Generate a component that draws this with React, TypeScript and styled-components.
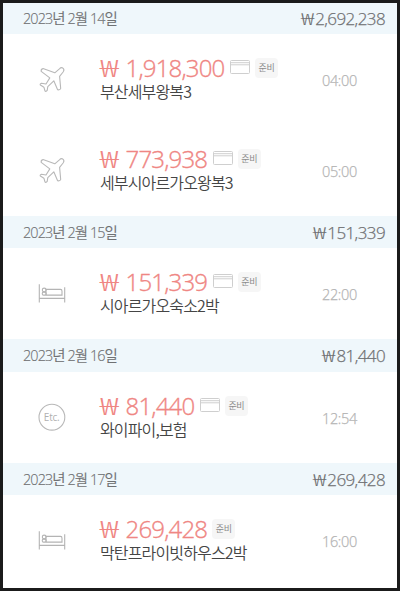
import React from "react";
import styled, { createGlobalStyle } from "styled-components";

const GlobalStyle = createGlobalStyle`
  * { box-sizing: border-box; }
  body { margin: 0; background: #1b1b1b; font-family: "Open Sans", "Noto Sans CJK KR", sans-serif; }
`;

const Frame = styled.main`
  width: 400px;
  height: 591px;
  padding: 3px;
  background: #1b1b1b;
  overflow: hidden;
`;

const Screen = styled.div`
  height: 585px;
  background: #fff;
  display: flex;
  flex-direction: column;
`;

const DayHeader = styled.header<{ $height: number }>`
  flex: none;
  height: ${(p) => p.$height}px;
  padding: 1px 12px 0 20px;
  display: flex;
  align-items: center;
  justify-content: space-between;
  background: #eff7fb;
  color: #6f7173;
  white-space: nowrap;
`;

const DayLabel = styled.span`
  font-size: 14.4px;
  line-height: 20px;
  font-weight: 350;
  letter-spacing: -0.9px;
  -webkit-text-stroke: 0.15px #6f7173;
`;

const DayTotal = styled.span`
  display: flex;
  font-size: 17px;
  line-height: 22px;
  font-weight: 350;
  letter-spacing: -0.6px;
  -webkit-text-stroke: 0.25px #6f7173;
`;

const Won = styled.span<{ $width: number }>`
  display: inline-block;
  flex: none;
  width: ${(p) => p.$width}px;
  font-family: "Noto Sans CJK KR", sans-serif;
  font-weight: 300;
  letter-spacing: 0;
  -webkit-text-stroke: 0;
  transform: translateY(-1px) scaleX(1.45);
  transform-origin: left center;
`;

const Row = styled.article`
  flex: none;
  height: 91px;
  display: grid;
  grid-template-columns: 97px 1fr 105px;
`;

const IconCell = styled.div`
  display: flex;
  justify-content: center;
  padding-top: 25px;
  svg { display: block; }
`;

const Details = styled.div`
  padding-top: 20px;
  white-space: nowrap;
`;

const AmountLine = styled.div`
  height: 27px;
  display: flex;
  align-items: center;
`;

const Amount = styled.span`
  display: flex;
  color: #ef8683;
  font-size: 24px;
  line-height: 27px;
  font-weight: 300;
  letter-spacing: -0.8px;
  -webkit-text-stroke: 0.35px #ef8683;
`;

const CardIcon = styled.svg`
  display: block;
  margin: 0 0 2px 5.5px;
`;

const Badge = styled.span`
  width: 23px;
  height: 20px;
  margin: 0 0 0 5px;
  border-radius: 4px;
  background: #f6f6f6;
  color: #8b8b8b;
  font-size: 9px;
  line-height: 20px;
  text-align: center;
  letter-spacing: -0.3px;
`;

const Name = styled.div`
  color: #454545;
  font-family: "Noto Sans CJK KR", sans-serif;
  font-size: 16px;
  line-height: 20px;
  font-weight: 350;
  letter-spacing: -0.85px;
`;

const Time = styled.time`
  padding: 37px 0 0 30px;
  color: #b4b4b4;
  font-size: 14.5px;
  line-height: 20px;
  font-weight: 350;
  letter-spacing: -0.35px;
  -webkit-text-stroke: 0.25px #b4b4b4;
`;

type Kind = "plane" | "bed" | "etc";

const Plane = () => (
  <svg width="28" height="40" viewBox="0 0 28 40" fill="none" stroke="#b8b8b8" strokeWidth="1.1" strokeLinejoin="round">
    <path d="M25.2 9.4C24.2 8.5 22.4 8.8 21.4 9.8L16.8 13.8L5 9.6C3.8 9.8 3 11 3.2 12.4L11.8 18.9L8 25L3.4 24.2C2.4 24.5 1.8 25.4 2.4 26L5.9 28.2L7 32C7.6 32.8 8.8 32 9.2 31.4L9.8 27.6L15.8 21.8L19.4 30.3C19.8 31.4 22.5 30.6 22.7 29.5L21.6 17.4L25.1 13C26 11.8 26.2 10.4 25.2 9.4Z" />
  </svg>
);

const Bed = () => (
  <svg width="28" height="40" viewBox="0 0 28 40" fill="none" stroke="#b4b4b4" strokeWidth="1.1">
    <path d="M1.3 11.3V29.5M26.7 14.2V29.5M1.5 25.4H27" />
    <path d="M8 16.4H22.5C23.5 16.4 24 17.2 24 18.3V22.1H8Z" />
    <circle cx="6.2" cy="17" r="1.9" />
    <rect x="4.3" y="19.1" width="3.8" height="3" rx="1.1" />
  </svg>
);

const Etc = () => (
  <svg width="28" height="40" viewBox="0 0 28 40">
    <circle cx="13.9" cy="20.2" r="12.9" fill="none" stroke="#b8b8b8" strokeWidth="1.1" />
    <text x="13.7" y="24" textAnchor="middle" fontFamily="Open Sans, sans-serif" fontSize="10" letterSpacing="-0.2" fill="#b0b0b0">Etc.</text>
  </svg>
);

const icons = { plane: Plane, bed: Bed, etc: Etc };

const Card = () => (
  <CardIcon width="20" height="14" viewBox="0 0 20 14" fill="none" stroke="#cfcfcf">
    <rect x="0.5" y="0.5" width="19" height="13" rx="1" />
    <path d="M1 2.7H19M1 4.8H19" />
  </CardIcon>
);

interface Expense { kind: Kind; amount: string; name: string; time: string; card: boolean }
interface Day { date: string; total: string; height: number; items: Expense[] }

const days: Day[] = [
  { date: "2023년 2월 14일", total: "2,692,238", height: 31, items: [
    { kind: "plane", amount: "1,918,300", name: "부산세부왕복3", time: "04:00", card: true },
    { kind: "plane", amount: "773,938", name: "세부시아르가오왕복3", time: "05:00", card: true },
  ] },
  { date: "2023년 2월 15일", total: "151,339", height: 32, items: [
    { kind: "bed", amount: "151,339", name: "시아르가오숙소2박", time: "22:00", card: true },
  ] },
  { date: "2023년 2월 16일", total: "81,440", height: 33, items: [
    { kind: "etc", amount: "81,440", name: "와이파이,보험", time: "12:54", card: true },
  ] },
  { date: "2023년 2월 17일", total: "269,428", height: 32, items: [
    { kind: "bed", amount: "269,428", name: "막탄프라이빗하우스2박", time: "16:00", card: false },
  ] },
];

export default function App() {
  return (
    <Frame>
      <GlobalStyle />
      <Screen>
        {days.map((day) => (
          <React.Fragment key={day.date}>
            <DayHeader $height={day.height}>
              <DayLabel>{day.date}</DayLabel>
              <DayTotal><Won $width={14}>₩</Won>{day.total}</DayTotal>
            </DayHeader>
            {day.items.map((item) => {
              const Icon = icons[item.kind];
              return (
                <Row key={item.name}>
                  <IconCell><Icon /></IconCell>
                  <Details>
                    <AmountLine>
                      <Amount><Won $width={25.5}>₩</Won>{item.amount}</Amount>
                      {item.card && <Card />}
                      <Badge>준비</Badge>
                    </AmountLine>
                    <Name>{item.name}</Name>
                  </Details>
                  <Time>{item.time}</Time>
                </Row>
              );
            })}
          </React.Fragment>
        ))}
      </Screen>
    </Frame>
  );
}
